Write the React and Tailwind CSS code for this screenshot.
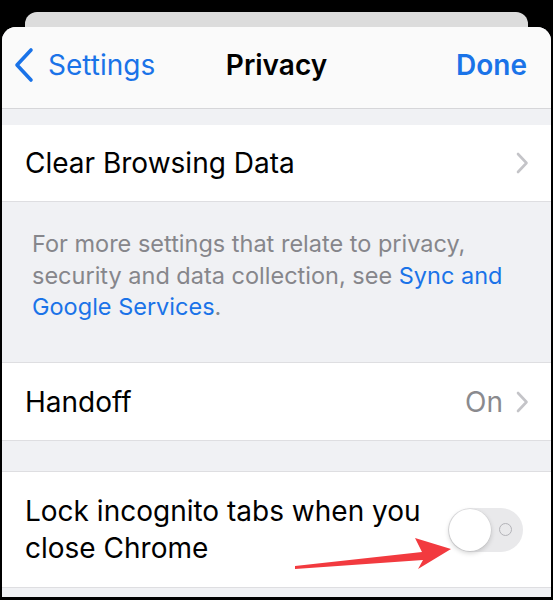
import React from "react";

function Chevron({ className = "" }) {
  return (
    <svg className={className} width="14" height="22" viewBox="0 0 14 22" fill="none">
      <path d="M3 2 L11.5 11 L3 20" stroke="#c4c4c8" strokeWidth="2.6" strokeLinecap="round" strokeLinejoin="round" />
    </svg>
  );
}

export default function App() {
  return (
    <div className="w-[553px] h-[600px] bg-black overflow-hidden px-[2px] pb-[3px] flex flex-col font-['Inter','Liberation_Sans',sans-serif] antialiased">
      <div className="mx-[23px] mt-[12px] h-[25px] shrink-0 rounded-t-[12px] bg-[#dcdcdc]" />
      <div className="relative -mt-[10px] flex-1 flex flex-col rounded-t-[14px] overflow-hidden bg-[#f0f1f4]">
        {/* Nav bar */}
        <div className="h-[82px] shrink-0 grid grid-cols-[1fr_auto_1fr] items-center pb-[6px] bg-[#fafafa] border-b border-[#d6d6d9]">
          <div className="flex items-center pl-[11px] text-[#1a73e8] text-[28px] leading-none">
            <svg width="22" height="36" viewBox="0 0 22 36" fill="none">
              <path d="M18 3 L4 18 L18 33" stroke="#1a73e8" strokeWidth="3.6" strokeLinecap="round" strokeLinejoin="round" />
            </svg>
            <span className="ml-[13px]">Settings</span>
          </div>
          <div className="text-[28px] leading-none font-semibold text-black">Privacy</div>
          <div className="flex justify-end pr-[24px] text-[28px] leading-none font-semibold text-[#1a73e8]">Done</div>
        </div>

        <div className="h-[16px] shrink-0" />

        {/* Clear Browsing Data */}
        <div className="h-[77px] shrink-0 flex items-center justify-between bg-white border-b border-[#dedee1] pl-[23px] pr-[22px]">
          <span className="text-[28px] text-black">Clear Browsing Data</span>
          <Chevron />
        </div>

        {/* Info */}
        <div className="h-[160px] shrink-0 px-[30px] pt-[26px] text-[23.5px] leading-[31.5px] text-[#86868b]">
          <p>
            For more settings that relate to privacy, security and data collection, see{" "}
            <span className="text-[#1a73e8]">Sync and Google Services</span>.
          </p>
        </div>

        {/* Handoff */}
        <div className="h-[79px] shrink-0 flex items-center bg-white border-y border-[#dedee1] pl-[23px] pr-[22px]">
          <span className="flex-1 text-[28px] text-black">Handoff</span>
          <span className="text-[28px] text-[#8a8a8e] mr-[12px]">On</span>
          <Chevron />
        </div>

        <div className="h-[30px] shrink-0" />

        {/* Lock incognito */}
        <div className="relative h-[117px] shrink-0 flex items-center bg-white border-y border-[#dedee1] pl-[23px] pr-[28px]">
          <span className="flex-1 text-[28px] leading-[37px] text-black">
            Lock incognito tabs when you close Chrome
          </span>
          <div className="relative shrink-0 w-[75px] h-[44px] rounded-full bg-[#e9e9eb] flex items-center px-[1px]">
            <div className="w-[42px] h-[42px] rounded-full bg-white shadow-[0_2px_5px_rgba(0,0,0,0.18),0_0_0_0.5px_rgba(0,0,0,0.06)]" />
            <div className="absolute left-[51px] top-[15px] w-[13px] h-[13px] rounded-full border-[1.5px] border-[#b3b3b8]" />
          </div>
          <svg className="absolute left-0 top-0 pointer-events-none" width="549" height="117" viewBox="0 0 549 117">
            <polygon
              points="293,94 420,80 413,66 449,77 416,97 421,88 293,97"
              fill="#f23a3f"
              strokeLinejoin="round"
            />
          </svg>
        </div>

        <div className="flex-1" />
      </div>
    </div>
  );
}
